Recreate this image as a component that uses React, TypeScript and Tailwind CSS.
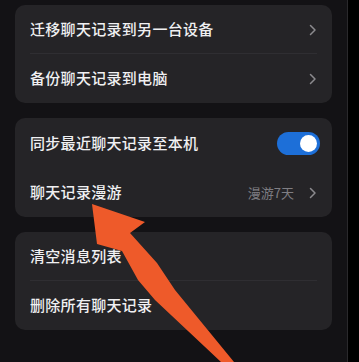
import React from 'react';

function Chevron() {
  return (
    <svg width="8" height="12" viewBox="0 0 8 12" className="shrink-0">
      <path d="M1.5 1.5 L6 6 L1.5 10.5" fill="none" stroke="#8b8a8e" strokeWidth="1.5" strokeLinecap="round" strokeLinejoin="round" />
    </svg>
  );
}

function Toggle() {
  return (
    <div className="-mr-[3px] w-[43px] h-[23px] rounded-full bg-[#1d6fd8] flex items-center justify-end pr-[3px]">
      <div className="w-[17px] h-[17px] rounded-full bg-white" />
    </div>
  );
}

function Row({ label, right, divider }: { label: string; right?: React.ReactNode; divider?: boolean }) {
  return (
    <div className="relative h-[49px] flex items-center pl-[15px] pr-[15px]">
      <span className="flex-1 text-[15px] font-medium text-[#f0f0f2] tracking-[0.3px]">{label}</span>
      {right}
      {divider && <div className="absolute left-[15px] right-[15px] bottom-0 h-px bg-[#2f2e32]" />}
    </div>
  );
}

export default function App() {
  return (
    <div
      className="relative w-[359px] h-[362px] overflow-hidden bg-[#131215] flex"
      style={{ fontFamily: '"Noto Sans CJK SC", "Noto Sans", sans-serif' }}
    >
      <div className="w-[347px] pt-[5px] px-[15px] flex flex-col gap-[15px]">
        <div className="rounded-[10px] bg-[#252427]">
          <Row label="迁移聊天记录到另一台设备" right={<Chevron />} divider />
          <Row label="备份聊天记录到电脑" right={<Chevron />} />
        </div>
        <div className="rounded-[10px] bg-[#252427] pt-px">
          <Row label="同步最近聊天记录至本机" right={<Toggle />} />
          <Row
            label="聊天记录漫游"
            right={
              <div className="flex items-center gap-[15px]">
                <span className="text-[13px] text-[#7f7e83]">漫游7天</span>
                <Chevron />
              </div>
            }
          />
        </div>
        <div className="rounded-[10px] bg-[#252427]">
          <Row label="清空消息列表" divider />
          <Row label="删除所有聊天记录" />
        </div>
      </div>
      <div className="flex-1 bg-black border-l border-[#2a292c]" />

      {/* arrow overlay */}
      <svg className="absolute inset-0 pointer-events-none" width="359" height="362" viewBox="0 0 359 362">
        <polygon
          points="92,204 145,222 130,233 157,263 175,290 234,362 221,362 155,300 138,280 122,251 97,244"
          fill="#ee5a2a"
        />
      </svg>
    </div>
  );
}
